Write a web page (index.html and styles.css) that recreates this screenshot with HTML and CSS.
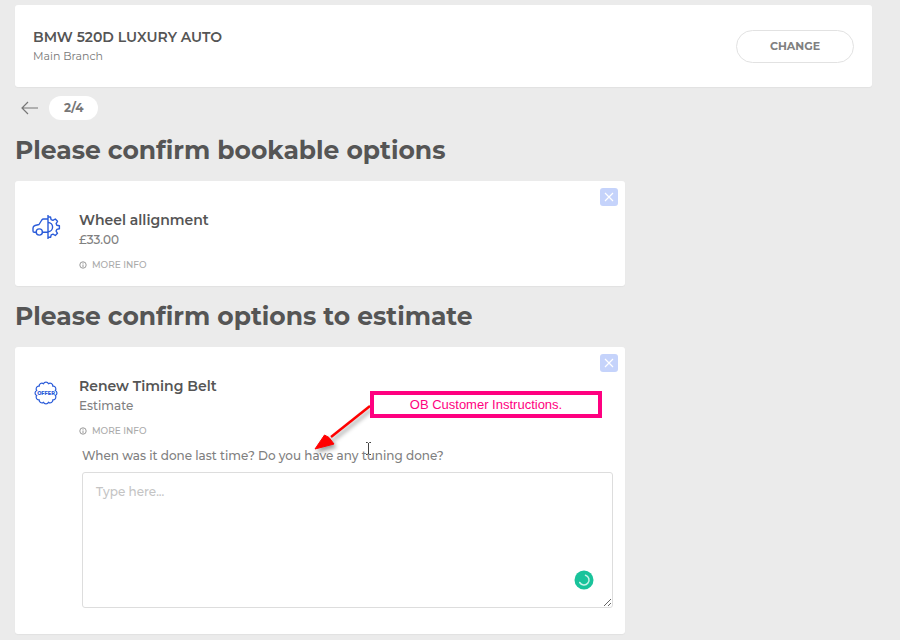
FILE: index.html
```html
<!DOCTYPE html>
<html lang="en">
<head>
<meta charset="utf-8">
<meta name="viewport" content="width=device-width, initial-scale=1">
<title>Confirm options</title>
<link rel="stylesheet" href="styles.css">
</head>
<body>
<main class="page">
  <header class="card vehicle">
    <div>
      <div class="vehicle-name">BMW 520D LUXURY AUTO</div>
      <div class="branch">Main Branch</div>
    </div>
    <button class="change" type="button">CHANGE</button>
  </header>

  <nav class="steps">
    <a class="back" href="#" aria-label="Back">
      <svg width="18" height="14" viewBox="0 0 18 14" fill="none" stroke="#777" stroke-width="1.2"><path d="M17 7H1M7 1L1 7l6 6"/></svg>
    </a>
    <span class="step">2/4</span>
  </nav>

  <h1 class="title">Please confirm bookable options</h1>
  <section class="card option">
    <button class="remove" type="button" aria-label="Remove">
      <svg width="10" height="10" viewBox="0 0 10 10" stroke="#fff" stroke-width="1.2"><path d="M1 1l8 8M9 1L1 9"/></svg>
    </button>
    <svg class="icon" width="30" height="26" viewBox="0 0 30 26" fill="none" stroke="#2b5cd9" stroke-width="1.4" stroke-linejoin="round">
      <path d="M16 1v24M16 5h-4.500q-1 0-1.700 1L7 10.500l-4 1q-2 .6-2 2.500v3q0 1.200 1.200 1.200H4M10.500 18.200H16"/>
      <circle cx="7.300" cy="18" r="3.100"/>
      <path d="M16 8.500a4.600 4.600 0 0 1 0 9.200M16 3h2.500l.6 2.600 1.800.8L23.300 5l2.200 2.300-1.400 2.300.7 1.700 2.600.5v3l-2.600.6-.7 1.700 1.400 2.200-2.200 2.200-2.300-1.300-1.800.7-.6 2.300H16"/>
    </svg>
    <div class="body">
      <h2 class="name">Wheel allignment</h2>
      <div class="price">£33.00</div>
      <a class="more" href="#">
        <svg width="8" height="8" viewBox="0 0 8 8" fill="none" stroke="#999"><circle cx="4" cy="4" r="3.200"/><path d="M4 1.800v.9M4 3.500v2.700"/></svg>
        MORE INFO
      </a>
    </div>
  </section>

  <h1 class="title">Please confirm options to estimate</h1>
  <section class="card option">
    <button class="remove" type="button" aria-label="Remove">
      <svg width="10" height="10" viewBox="0 0 10 10" stroke="#fff" stroke-width="1.2"><path d="M1 1l8 8M9 1L1 9"/></svg>
    </button>
    <svg class="icon" width="30" height="26" viewBox="-14 -13 30 26">
      <path fill="none" stroke="#2b5cd9" stroke-width="1.2" stroke-linejoin="round" d="M9.200-2.460a2.600 2.600 0 0 1 0 4.920a2.600 2.600 0 0 1-2.460 4.280a2.600 2.600 0 0 1-4.280 2.460a2.600 2.600 0 0 1-4.920 0a2.600 2.600 0 0 1-4.280-2.460a2.600 2.600 0 0 1-2.460-4.280a2.600 2.600 0 0 1 0-4.920a2.600 2.600 0 0 1 2.460-4.280a2.600 2.600 0 0 1 4.280-2.460a2.600 2.600 0 0 1 4.920 0a2.600 2.600 0 0 1 4.280 2.460a2.600 2.600 0 0 1 2.460 4.280z"/>
      <text class="offer" x="0" y="2" text-anchor="middle">OFFER</text>
    </svg>
    <div class="body">
      <h2 class="name">Renew Timing Belt</h2>
      <div class="price">Estimate</div>
      <a class="more" href="#">
        <svg width="8" height="8" viewBox="0 0 8 8" fill="none" stroke="#999"><circle cx="4" cy="4" r="3.200"/><path d="M4 1.800v.9M4 3.500v2.700"/></svg>
        MORE INFO
      </a>
      <div class="question">
        <label for="answer">When was it done last time? Do you have any tuning done?</label>
        <textarea id="answer" placeholder="Type here..."></textarea>
        <svg class="checker" width="20" height="20" viewBox="0 0 20 20" fill="none"><circle cx="10" cy="10" r="9.500" fill="#19c39b"/><path d="M11.500 5.200a5 5 0 1 1-5.800 7.300" stroke="#c9f3e8" stroke-width="1.500" stroke-linecap="round"/></svg>
      </div>
    </div>
    <svg class="arrow" width="62" height="54" viewBox="0 0 62 54">
      <path d="M57 6L18 37" stroke="#f00" stroke-width="2.500"/>
      <path d="M2 49L11.500 35 16 37.500 21 44z" fill="#f00" stroke="#f00"/>
    </svg>
    <div class="callout">OB Customer Instructions.</div>
    <svg class="cursor" width="7" height="15" viewBox="0 0 7 15" fill="none" stroke="#444"><path d="M1 1.500h1.500l1 1 1-1H6M3.500 2v11M1 13.500h1.500l1-1 1 1H6"/></svg>
  </section>
</main>
</body>
</html>
```
FILE: styles.css
```css
* { box-sizing: border-box; }

body {
  margin: 0;
  background: #ebebeb;
  color: #555;
  font-family: Montserrat, Inter, sans-serif;
}

button { font: inherit; cursor: pointer; }

.page { padding: 5px 28px 5px 15px; }

.card {
  background: #fff;
  border-radius: 3px;
  box-shadow: 0 1px 1px #e2e2e2;
}

.vehicle {
  display: flex;
  align-items: center;
  justify-content: space-between;
  padding: 22px 18px;
}

.vehicle-name {
  font-size: 14px;
  line-height: 20px;
  font-weight: 600;
}

.branch {
  font-size: 11px;
  line-height: 18px;
  color: #777;
}

.change {
  width: 118px;
  height: 33px;
  border: 1px solid #e2e2e2;
  border-radius: 17px;
  background: #fff;
  color: #808080;
  font-size: 11px;
  font-weight: 700;
}

.steps {
  display: flex;
  align-items: center;
  gap: 10px;
  margin-top: 9px;
  padding-left: 6px;
}

.back { display: flex; }

.step {
  padding: 0 15px;
  border-radius: 12px;
  background: #fff;
  color: #777;
  font-size: 12px;
  line-height: 24px;
  font-weight: 700;
}

.title {
  margin: 14px 0;
  font-size: 25px;
  line-height: 33px;
  font-weight: 700;
}

.option {
  position: relative;
  display: flex;
  gap: 17px;
  max-width: 610px;
  padding: 29px 12px 13px 17px;
}

.icon {
  flex: none;
  margin-top: 4px;
}

.offer {
  font-size: 5px;
  font-weight: 800;
  fill: #2b5cd9;
}

.body { flex: 1; }

.name {
  margin: 0;
  font-size: 14px;
  line-height: 20px;
  font-weight: 600;
}

.price {
  font-size: 12px;
  line-height: 19px;
  font-weight: 500;
  color: #808080;
}

.more {
  display: flex;
  align-items: center;
  gap: 5px;
  margin-top: 8px;
  color: #aaa;
  font-size: 9px;
  line-height: 16px;
  font-weight: 500;
  text-decoration: none;
}

.remove {
  position: absolute;
  top: 7px;
  right: 7px;
  display: flex;
  align-items: center;
  justify-content: center;
  width: 18px;
  height: 18px;
  padding: 0;
  border: 0;
  border-radius: 3px;
  background: #c5d3fb;
}

.question {
  position: relative;
  margin: 7px 0 13px 3px;
}

.question label {
  display: block;
  color: #808080;
  font-size: 12px;
  line-height: 20px;
  font-weight: 500;
}

.question textarea {
  display: block;
  width: 100%;
  height: 136px;
  margin-top: 6px;
  padding: 10px 13px;
  border: 1px solid #ddd;
  border-radius: 3px;
  color: #555;
  font: inherit;
  font-size: 12px;
  line-height: 18px;
  font-weight: 500;
  resize: both;
}

.question textarea::placeholder { color: #c4c4c4; }

.checker {
  position: absolute;
  right: 19px;
  bottom: 18px;
}

.callout {
  position: absolute;
  top: 44px;
  left: 355px;
  width: 232px;
  border: 4px solid #ff0080;
  background: #fff;
  color: #ff0080;
  font-family: "Liberation Sans", Arial, sans-serif;
  font-size: 13px;
  line-height: 19px;
  text-align: center;
}

.arrow {
  position: absolute;
  top: 53px;
  left: 298px;
  filter: drop-shadow(2px 3px 2px #0006);
}

.cursor {
  position: absolute;
  top: 94px;
  left: 350px;
}
```
